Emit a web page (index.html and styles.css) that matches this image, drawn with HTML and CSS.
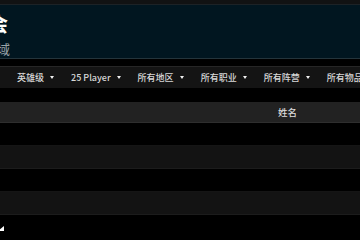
FILE: index.html
```html
<!DOCTYPE html>
<html lang="zh">
<head>
<meta charset="utf-8">
<link rel="stylesheet" href="styles.css">
</head>
<body>
<div class="topbar"></div>
<header class="hero">
  <div class="hero-inner">
    <h1 class="title">公会</h1>
    <div class="subtitle">所有区域</div>
  </div>
</header>
<nav class="filters">
  <span class="filter">英雄级<i class="caret"></i></span>
  <span class="filter">25 Player<i class="caret"></i></span>
  <span class="filter">所有地区<i class="caret"></i></span>
  <span class="filter">所有职业<i class="caret"></i></span>
  <span class="filter">所有阵营<i class="caret"></i></span>
  <span class="filter">所有物品<i class="caret"></i></span>
</nav>
<div class="table">
  <div class="thead"><span class="col-rank"></span><span class="col-name">姓名</span></div>
  <div class="row"></div>
  <div class="row alt"></div>
  <div class="row"></div>
  <div class="row alt"></div>
</div>
<div class="foot">
  <svg class="foot-icon" width="8" height="8" viewBox="0 0 8 8"><polygon points="0,7 6,2 6,7" fill="#fff"/></svg>
</div>
</body>
</html>
```

FILE: styles.css
```css
html, body {
  margin: 0;
  padding: 0;
  background: #000;
  width: 360px;
  height: 240px;
  overflow: hidden;
  font-family: "Noto Sans CJK SC", "Noto Sans", sans-serif;
}
.topbar {
  height: 4px;
  background: #111213;
  border-bottom: 1px solid #1c2226;
}
.hero {
  height: 53px;
  background: #011620;
  border-bottom: 1px solid #24343b;
  overflow: hidden;
}
.hero-inner {
  padding-top: 6px;
}
.title {
  margin: 0 0 0 -32px;
  font-size: 20px;
  line-height: 26px;
  font-weight: 700;
  color: #fff;
  white-space: nowrap;
}
.subtitle {
  margin: 4px 0 0 -42px;
  font-size: 13px;
  line-height: 16px;
  color: #9aa3a8;
  white-space: nowrap;
}
.filters {
  margin-top: 7px;
  height: 21px;
  background: #141414;
  border-top: 1px solid #262626;
  display: flex;
  align-items: center;
  gap: 17px;
  padding-left: 17px;
  white-space: nowrap;
  overflow: hidden;
}
.filter {
  display: flex;
  align-items: center;
  gap: 6px;
  font-size: 9px;
  line-height: 12px;
  color: #d8d8d8;
  font-weight: 500;
}
.caret {
  display: block;
  width: 0;
  height: 0;
  border-left: 2.5px solid transparent;
  border-right: 2.5px solid transparent;
  border-top: 3px solid #f0f0f0;
}
.table {
  margin-top: 14px;
}
.thead {
  height: 20px;
  background: #222;
  border-bottom: 1px solid #2e2e2e;
  display: grid;
  grid-template-columns: 278px 1fr;
  align-items: center;
}
.col-name {
  font-size: 9.5px;
  line-height: 12px;
  color: #dcdcdc;
  font-weight: 500;
}
.row {
  height: 22px;
  background: #000;
  border-bottom: 1px solid #151515;
}
.row.alt {
  background: #131313;
  border-bottom-color: #1c1c1c;
}
.foot {
  padding-top: 9px;
}
.foot-icon {
  display: block;
  margin-left: -2px;
}
```
